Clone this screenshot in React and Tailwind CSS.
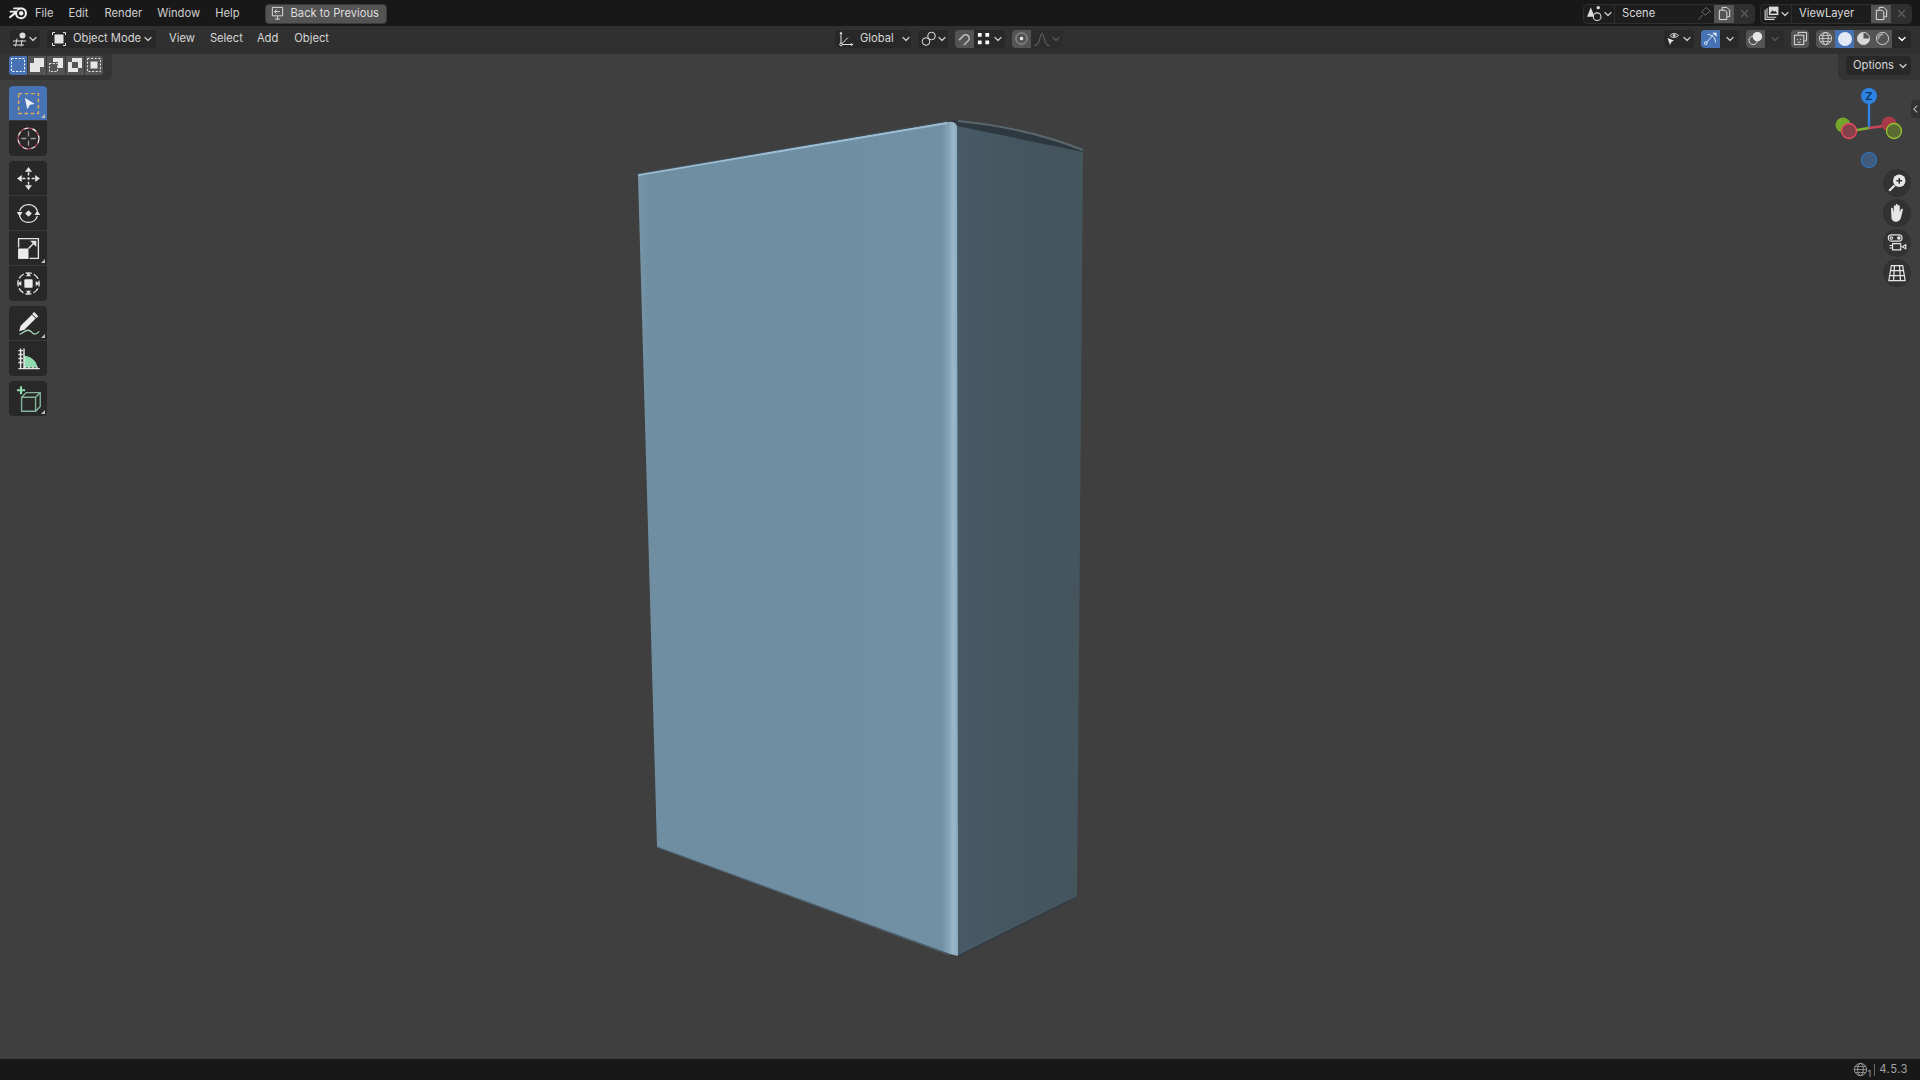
import React from 'react';

const Chevron = ({ className = 'text-[#c9c9c9]' }) => (
  <svg viewBox="0 0 10 10" className={`w-[10px] h-[10px] shrink-0 ${className}`} fill="none" stroke="currentColor" strokeWidth="1.3" strokeLinecap="round" strokeLinejoin="round">
    <path d="M2 3.5 5 6.5 8 3.5" />
  </svg>
);

// 16x16 icon wrapper, blender icons are drawn on this grid
const Ic = ({ size = 16, className = 'text-[#e2e2e2]', children }) => (
  <svg viewBox="0 0 16 16" width={size} height={size} className={`shrink-0 ${className}`} fill="none" stroke="currentColor" strokeWidth="1">
    {children}
  </svg>
);

const BlenderLogo = () => (
  <svg viewBox="0 0 20 16" width="20" height="16" className="shrink-0 text-[#eeeeee] mb-[2px]" fill="currentColor">
    <path fillRule="evenodd" d="M12 2.2a6 6 0 1 1-5.900 7.200L1.600 13a1 1 0 0 1-1.300-1.500L5 7.600H1.500a.9.9 0 0 1 0-1.800l6-.1A6 6 0 0 1 12 2.200Zm0 2.200a3.900 3.900 0 1 0 0 7.800 3.900 3.900 0 0 0 0-7.800Z" />
    <circle cx="12.200" cy="8.200" r="2.200" />
    <path d="M5 2.600h6v1.700H5a.85.85 0 0 1 0-1.700Z" />
  </svg>
);

const SelectModes = () => {
  const cells = [
    <Ic key="a" size={16} className="text-white"><rect x="1.500" y="1.500" width="13" height="13" strokeDasharray="2 1.600" /></Ic>,
    <Ic key="b" size={16} className="text-[#e6e6e6]"><path fill="currentColor" stroke="none" d="M5 1h10v9h-4v5H1V6h4Z" /></Ic>,
    <Ic key="c" size={16} className="text-[#e6e6e6]"><rect x="1.500" y="6.500" width="8" height="8" strokeDasharray="2 1.400" /><path fill="currentColor" stroke="none" d="M5 1h10v10h-5V5H5Z" /></Ic>,
    <Ic key="d" size={16} className="text-[#e6e6e6]"><path fill="currentColor" stroke="none" fillRule="evenodd" d="M5 1h10v10h-4v4H1V5h4Zm0 4v6h6V5Z" /></Ic>,
    <Ic key="e" size={16} className="text-[#e6e6e6]"><rect x="1.500" y="1.500" width="13" height="13" strokeDasharray="2 1.600" /><rect x="4.500" y="4.500" width="7" height="7" fill="currentColor" stroke="none" /></Ic>,
  ];
  return (
    <div className="flex ml-[9px] gap-px">
      {cells.map((c, i) => (
        <div key={i} className={`w-[18px] h-[19px] flex items-center justify-center ${i === 0 ? 'bg-[#4772b3] rounded-l-[3px]' : 'bg-[#545454]'} ${i === 4 ? 'rounded-r-[3px]' : ''}`}>
          {c}
        </div>
      ))}
    </div>
  );
};

const Tool = ({ active, corner, children }) => (
  <div className={`relative w-[38px] h-[35px] flex items-center justify-center border-b border-[#3a3a3a] last:border-b-0 ${active ? 'bg-[#4772b3]' : ''}`}>
    {children}
    {corner && <span className="absolute right-[2px] bottom-[2px] w-0 h-0 border-l-[4px] border-l-transparent border-b-[4px] border-b-[#bdbdbd]" />}
  </div>
);

const ToolGroup = ({ children }) => (
  <div className="w-[38px] rounded-[4px] bg-[#282828] overflow-hidden">{children}</div>
);

const Toolbar = () => (
  <div className="absolute left-[9px] top-[32px] flex flex-col gap-[5px]">
    <ToolGroup>
      <Tool active corner>
        <svg viewBox="0 0 24 24" width="25" height="25" fill="none">
          <rect x="2.500" y="2.500" width="19" height="19" stroke="#e4ab5a" strokeWidth="1.400" strokeDasharray="3.400 2.600" />
          <path d="M8.500 6.500 18 12.500l-4.500.6-2.700 4.400Z" fill="#e9edf4" />
        </svg>
      </Tool>
      <Tool>
        <svg viewBox="0 0 24 24" width="25" height="25" fill="none">
          <circle cx="12" cy="12" r="10" stroke="#e8e8e8" strokeWidth="1.300" strokeDasharray="5 3.400" />
          <circle cx="12" cy="12" r="10" stroke="#b04a5c" strokeWidth="1.300" strokeDasharray="5 3.400" strokeDashoffset="4.200" />
          <path d="M12 5v5M12 14v5M5 12h5M14 12h5" stroke="#9a9a9a" strokeWidth="1.300" />
        </svg>
      </Tool>
    </ToolGroup>
    <ToolGroup>
      <Tool>
        <svg viewBox="0 0 24 24" width="25" height="25" fill="#e4e4e4">
          <path d="m12 1 3.400 4.600H8.600ZM12 23l-3.400-4.600h6.800ZM1 12l4.600-3.400v6.800ZM23 12l-4.600 3.400V8.600Z" />
          <path d="M11.300 6h1.400v3h-1.400ZM11.300 15h1.400v3h-1.400ZM6 11.300h3v1.400H6ZM15 11.300h3v1.400h-3Z" />
          <circle cx="12" cy="12" r="1.200" />
        </svg>
      </Tool>
      <Tool>
        <svg viewBox="0 0 24 24" width="25" height="25" fill="none">
          <path d="M3.500 9.500A9 9 0 0 1 20.500 9.500M20.500 14.500A9 9 0 0 1 3.500 14.500" stroke="#e4e4e4" strokeWidth="1.300" />
          <path d="m12 8.800 3.200 3.200-3.200 3.200L8.800 12Z" fill="#e4e4e4" />
          <path d="m.8 10.500 5.400 0-2.700 4.500ZM23.200 13.500l-5.400 0 2.700-4.500Z" fill="#e4e4e4" />
        </svg>
      </Tool>
      <Tool corner>
        <svg viewBox="0 0 24 24" width="25" height="25" fill="none">
          <path d="M2.500 11V2.500h19v19H13" stroke="#e4e4e4" strokeWidth="1.300" />
          <rect x="2" y="12" width="10" height="10" fill="#ececec" />
          <path d="M12 12 18.500 5.500" stroke="#e4e4e4" strokeWidth="1.400" />
          <path d="M19.500 4.500v6l-6-6Z" fill="#e4e4e4" />
        </svg>
      </Tool>
      <Tool>
        <svg viewBox="0 0 24 24" width="25" height="25" fill="none">
          <circle cx="12" cy="12" r="10.200" stroke="#e4e4e4" strokeWidth="1.300" strokeDasharray="6 2" strokeDashoffset="3" />
          <rect x="8" y="8" width="8" height="8" rx="1" fill="#ececec" />
          <path d="m12 1.500 2.400 3.600H9.600ZM12 22.500l-2.400-3.600h4.800ZM1.500 12l3.600-2.400v4.800ZM22.500 12l-3.600 2.400V9.600Z" fill="#e4e4e4" />
        </svg>
      </Tool>
    </ToolGroup>
    <ToolGroup>
      <Tool corner>
        <svg viewBox="0 0 24 24" width="27" height="27" fill="none">
          <path d="m5.500 14.500 9.500-9.500 2.500 2.500-9.500 9.500-3.500 1Z" stroke="#ececec" strokeWidth="1.200" fill="#ececec" />
          <path d="m16 3.500 1-1 3 3-1 1Z" fill="#ececec" stroke="#ececec" strokeWidth="1" />
          <path d="M4 21.500c3 0 4-3.500 7.500-3.500 3.500 0 3.500 3.400 6 3.400 2 0 3-1.400 4-2.400" stroke="#a7d8b8" strokeWidth="1.200" />
        </svg>
      </Tool>
      <Tool>
        <svg viewBox="0 0 24 24" width="27" height="27" fill="none">
          <path d="M8 9.500c6 0 11 4.500 12 10.500H8Z" fill="#8fdcae" />
          <path d="M3 21h19M5 3v18M8 3v18M3 5h4M3 8.500h4M3 12h4M3 15.500h4M9 19v2M12.500 19v2M16 19v2M19.500 19v2" stroke="#e4e4e4" strokeWidth="1.300" />
        </svg>
      </Tool>
    </ToolGroup>
    <ToolGroup>
      <Tool corner>
        <svg viewBox="0 0 24 24" width="28" height="28" fill="none">
          <path d="M2.500 4.500h7M6 1v7" stroke="#8fdcae" strokeWidth="1.800" />
          <path d="M6.500 10.500h12v12h-12Zm0 0 4-4h12v12l-4 4m0-12 4-4" stroke="#83b39a" strokeWidth="1.200" />
        </svg>
      </Tool>
    </ToolGroup>
  </div>
);

// the thing that sits in the middle of the view, coords are screen pixels
const BoxModel = () => (
  <svg viewBox="0 54 1920 1005" className="absolute inset-0 w-full h-full">
    <defs>
      <linearGradient id="leftFace" gradientUnits="userSpaceOnUse" x1="638" y1="500" x2="958" y2="500">
        <stop offset="0" stopColor="#7896a8" />
        <stop offset="0.03" stopColor="#6f8ea1" />
        <stop offset="0.5" stopColor="#6f8ea1" />
        <stop offset="0.95" stopColor="#7190a3" />
        <stop offset="0.972" stopColor="#86a5b7" />
        <stop offset="0.985" stopColor="#9ab8ca" />
        <stop offset="1" stopColor="#8aaac0" />
      </linearGradient>
      <linearGradient id="rightFace" gradientUnits="userSpaceOnUse" x1="957" y1="500" x2="1083" y2="500">
        <stop offset="0" stopColor="#485a66" />
        <stop offset="0.6" stopColor="#44555e" />
        <stop offset="1" stopColor="#44555e" />
      </linearGradient>
    </defs>
    <path d="M948 122Q952 120 956 120C1000 124 1050 135 1083 150L1083 154 957 127Z" fill="#2e383f" />
    <path d="M958 121C1000 125 1045 135 1083 150" fill="none" stroke="#59666d" strokeWidth="2" />
    <path d="M957 126 1083 152 1077 897 957 956Z" fill="url(#rightFace)" />
    <path d="M638 175 948 122Q955 121 957 126L958 956 950 954 657 847Z" fill="url(#leftFace)" />
    <path d="M638 175 947 123" stroke="#9abed6" strokeWidth="2" fill="none" />
    <path d="M638 174 947 121" stroke="#44545e" strokeWidth="0.6" fill="none" />
    <path d="M657 847 950 955" stroke="#4e6270" strokeWidth="1.200" fill="none" />
    <path d="M958 956 1077 897" stroke="#2f3a41" strokeWidth="1.200" fill="none" />
  </svg>
);

const NavButton = ({ children }) => (
  <div className="w-[28px] h-[28px] rounded-full bg-[#323232] flex items-center justify-center">{children}</div>
);

const Gizmo = () => (
  <svg viewBox="0 0 80 100" width="80" height="100" className="absolute right-[11px] top-[32px]">
    <path d="M40 42V14" stroke="#2f82e6" strokeWidth="2.400" />
    <path d="M40 42 22 45" stroke="#7fb130" strokeWidth="2.400" />
    <path d="M40 42 62 39" stroke="#c94658" strokeWidth="2.400" />
    <circle cx="14" cy="39" r="7.500" fill="#74a62c" />
    <circle cx="60" cy="38" r="7.500" fill="#a83a4a" />
    <circle cx="20" cy="45" r="7.500" fill="#84414b" stroke="#ee4a60" strokeWidth="1.300" />
    <circle cx="65" cy="45" r="7.500" fill="#5a6c33" stroke="#94c52f" strokeWidth="1.300" />
    <circle cx="40" cy="10" r="8" fill="#2c83e2" />
    <text x="40" y="14" textAnchor="middle" fontSize="11" fontWeight="700" fill="#103a66" fontFamily="Inter, sans-serif">Z</text>
    <circle cx="40" cy="74" r="7.500" fill="#3f5a7c" stroke="#2f76c8" strokeWidth="1.200" />
  </svg>
);

const NavButtons = () => (
  <div className="absolute right-[9px] top-[115px] flex flex-col gap-[2px]">
    <NavButton>
      <svg viewBox="0 0 16 16" width="20" height="20">
        <circle cx="9.800" cy="6.200" r="5" fill="#e6e6e6" />
        <path d="M6 10 1.800 14.200" stroke="#e6e6e6" strokeWidth="1.800" />
        <path d="M7.500 6.200h4.600M9.800 3.900v4.600" stroke="#323232" strokeWidth="1.200" />
      </svg>
    </NavButton>
    <NavButton>
      <svg viewBox="0 0 16 16" width="20" height="20" fill="#e6e6e6">
        <path d="M3.200 4.600c0-1 1.300-1 1.500 0l.7 3V2.800c0-1.100 1.600-1.100 1.600 0v4.400V1.600c0-1 1.600-1 1.600 0v5.600-4.600c0-1 1.600-1 1.600 0v5.200c.3-1.200.7-2.600 1.200-3 .8-.6 1.500 0 1.200.9l-1.200 5c-.5 2.500-1.800 4.300-4.200 4.300-2 0-3-1-3.600-2.600Z" />
      </svg>
    </NavButton>
    <NavButton>
      <svg viewBox="0 0 16 16" width="20" height="20" fill="none" stroke="#e6e6e6" strokeWidth="0.900">
        <rect x="1" y="1.500" width="11" height="5" rx="2.500" />
        <circle cx="3.500" cy="4" r="1" /><circle cx="9.500" cy="4" r="1" fill="#e6e6e6" />
        <path d="M4.500 8.500h6.500v5H4.500ZM2 10h2.500M2 12h2.500M12.200 11l2.800-1.700v3.400Z" />
      </svg>
    </NavButton>
    <NavButton>
      <svg viewBox="0 0 16 16" width="20" height="20" fill="none" stroke="#e6e6e6" strokeWidth="1">
        <path d="M3.500 2h9l2 12h-13ZM1.900 10h12.200M2.700 6h10.600M6 2l-.8 12M10 2l.8 12" />
      </svg>
    </NavButton>
  </div>
);

const TopBar = () => (
  <div className="h-[26px] shrink-0 bg-[#181818] flex items-center text-[#cfcfcf] pt-px">
    <div className="ml-[9px] w-[26px]"><BlenderLogo /></div>
    <span>File</span>
    <span className="ml-[15px]">Edit</span>
    <span className="ml-[16px]">Render</span>
    <span className="ml-[15px]">Window</span>
    <span className="ml-[15px]">Help</span>
    <div className="ml-[25px] w-[122px] h-[20px] rounded-[4px] bg-[#545454] border border-[#3a3a3a] flex items-center pl-[4px] gap-[6px] text-[#dedede]">
      <Ic size={15} className="text-[#e2e2e2]">
        <path d="M2.500 1.500h11v9h-11Z" />
        <path d="M5.500 14h5M8 11v3" />
        <path d="M10.500 6H5m2-2.200L4.800 6 7 8.200" />
      </Ic>
      <span>Back to Previous</span>
    </div>
    <div className="ml-auto mr-[8px] flex gap-[5px]">
      <div className="w-[172px] h-[20px] rounded-[4px] bg-[#1d1d1d] border border-[#2e2e2e] flex items-center overflow-hidden">
        <div className="w-[31px] flex items-center justify-center border-r border-[#2e2e2e] h-full">
          <Ic size={17} className="text-[#dcdcdc]">
            <circle cx="11.500" cy="2.500" r="1.600" fill="currentColor" stroke="none" />
            <path d="M4.500 2 8 11H1Z" fill="currentColor" stroke="none" />
            <circle cx="10.500" cy="11" r="3.600" fill="#1d1d1d" />
          </Ic>
          <Chevron />
        </div>
        <span className="pl-[7px] flex-1 text-[#d8d8d8]">Scene</span>
        <div className="w-[20px] flex justify-center">
          <Ic size={15} className="text-[#6f6f6f]"><path d="M10 1.500l4.500 4.500-3 1-2.500 3-4-4 3-2.500ZM6 9.500 1.500 14.500" /></Ic>
        </div>
        <div className="w-[20px] h-full bg-[#545454] flex items-center justify-center">
          <Ic size={15} className="text-[#e8e8e8]"><path d="M5.500 4V1.500h5l3 3v7H11M2.500 4.500h6l2 2v8h-8Z" /></Ic>
        </div>
        <div className="w-[20px] h-full bg-[#2f2f2f] flex items-center justify-center">
          <Ic size={11} className="text-[#5e5e5e]"><path d="m3 3 10 10M13 3 3 13" strokeWidth="1.800" /></Ic>
        </div>
      </div>
      <div className="w-[152px] h-[20px] rounded-[4px] bg-[#1d1d1d] border border-[#2e2e2e] flex items-center overflow-hidden">
        <div className="w-[31px] flex items-center justify-center border-r border-[#2e2e2e] h-full">
          <Ic size={17} className="text-[#dcdcdc]">
            <path d="M2 4.500v9h9M3.800 3v8.500h8.700" />
            <rect x="5.500" y="1.500" width="9" height="8" fill="currentColor" stroke="none" />
            <path d="m6.500 8 2.500-3 1.500 1.500 1-1 2 2.500Z" fill="#1d1d1d" stroke="none" />
          </Ic>
          <Chevron />
        </div>
        <span className="pl-[7px] flex-1 text-[#d8d8d8]">ViewLayer</span>
        <div className="w-[20px] h-full bg-[#545454] flex items-center justify-center">
          <Ic size={15} className="text-[#e8e8e8]"><path d="M5.500 4V1.500h5l3 3v7H11M2.500 4.500h6l2 2v8h-8Z" /></Ic>
        </div>
        <div className="w-[20px] h-full bg-[#2f2f2f] flex items-center justify-center">
          <Ic size={11} className="text-[#5e5e5e]"><path d="m3 3 10 10M13 3 3 13" strokeWidth="1.800" /></Ic>
        </div>
      </div>
    </div>
  </div>
);

const HeaderBar = () => (
  <div className="h-[28px] shrink-0 bg-[#303030] flex items-center text-[#d6d6d6] pb-[3px]">
    <div className="ml-[10px] w-[30px] h-[18px] rounded-[4px] bg-[#282828] flex items-center justify-center">
      <Ic size={16} className="text-[#dcdcdc]">
        <circle cx="10.500" cy="4.500" r="3" fill="currentColor" stroke="none" />
        <path d="M1 10h13M1 14h11M5 7.500l-1.500 8M10 9l-1 6.500" />
      </Ic>
      <Chevron />
    </div>
    <div className="ml-[7px] w-[109px] h-[18px] rounded-[4px] bg-[#282828] flex items-center pl-[4px] pr-[3px]">
      <Ic size={16} className="text-[#e2e2e2]">
        <rect x="3.500" y="3.500" width="9" height="9" fill="currentColor" stroke="none" />
        <path d="M1.500 4V1.500H4M12 1.500h2.500V4M14.500 12v2.500H12M4 14.500H1.500V12" />
      </Ic>
      <span className="ml-[6px] flex-1 whitespace-nowrap">Object Mode</span>
      <Chevron />
    </div>
    <span className="ml-[13px]">View</span>
    <span className="ml-[15px]">Select</span>
    <span className="ml-[14px]">Add</span>
    <span className="ml-[16px]">Object</span>

    <div className="ml-[506px] flex items-center">
      <div className="w-[76px] h-[18px] rounded-[4px] bg-[#282828] flex items-center pl-[3px]">
        <Ic size={16} className="text-[#e2e2e2]">
          <path d="M3 2.500v11h11M3 13.500l7-7" />
          <path d="m3 .5 1.600 2.600H1.400ZM15.500 13.500l-2.600 1.600v-3.200Z" fill="currentColor" stroke="none" />
          <circle cx="3" cy="13.500" r="1.300" fill="#282828" />
        </Ic>
        <span className="ml-[6px] flex-1">Global</span>
        <Chevron />
      </div>
      <div className="ml-[7px] w-[30px] h-[18px] rounded-[4px] bg-[#282828] flex items-center pl-[3px]">
        <Ic size={16} className="text-[#e2e2e2]">
          <circle cx="5" cy="10.500" r="3.800" />
          <circle cx="10.500" cy="5" r="3.800" />
        </Ic>
        <Chevron />
      </div>
      <div className="ml-[7px] w-[50px] h-[18px] rounded-[4px] bg-[#282828] flex items-center overflow-hidden">
        <div className="w-[19px] h-full bg-[#545454] flex items-center justify-center">
          <Ic size={16} className="text-[#b9b9b9]"><path transform="rotate(45 8 8)" d="M4.500 13V7a3.500 3.500 0 0 1 7 0v6" strokeWidth="1.600" /></Ic>
        </div>
        <div className="flex-1 flex items-center justify-center gap-[2px]">
          <Ic size={15} className="text-white">
            <path d="M2 2h4v4H2ZM10 2h4v4h-4ZM2 10h4v4H2ZM10 10h4v4h-4Z" fill="currentColor" stroke="none" />
          </Ic>
          <Chevron />
        </div>
      </div>
      <div className="ml-[7px] w-[50px] h-[18px] rounded-[4px] bg-[#2c2c2c] flex items-center overflow-hidden">
        <div className="w-[19px] h-full bg-[#545454] flex items-center justify-center">
          <Ic size={15} className="text-[#a8a8a8]"><circle cx="8" cy="8" r="6" /><circle cx="8" cy="8" r="1.800" fill="#f0f0f0" stroke="none" /></Ic>
        </div>
        <div className="flex-1 flex items-center justify-center">
          <Ic size={18} className="text-[#5c5c5c]"><path d="M1 14c3 0 4-2 5-6 .8-3 1.200-5 2-5s1.200 2 2 5c1 4 2 6 5 6" /></Ic>
          <Chevron className="text-[#555555]" />
        </div>
      </div>
    </div>

    <div className="ml-auto mr-[9px] flex items-center">
      <div className="w-[30px] h-[18px] rounded-[4px] bg-[#282828] flex items-center justify-center">
        <Ic size={16} className="text-[#e6e6e6]">
          <path d="M4 4.500C6 2 10 2 12.500 4.500 10 7 6 7 4 4.500Z" />
          <circle cx="8.200" cy="4.500" r="1.300" fill="currentColor" stroke="none" />
          <path d="m1.500 7 6.500 2.500-2.500 1.200L4 14Z" fill="currentColor" stroke="none" />
        </Ic>
        <Chevron />
      </div>
      <div className="ml-[7px] w-[38px] h-[18px] rounded-[4px] bg-[#282828] flex items-center overflow-hidden">
        <div className="w-[19px] h-full bg-[#4772b3] flex items-center justify-center">
          <Ic size={15} className="text-[#eef3fb]">
            <circle cx="3" cy="13" r="1.500" />
            <path d="M4 12 11 4M13.500 12C13 7 10 4 5 3.500" />
            <path d="M10 1.800h4.500V6Z" fill="currentColor" stroke="none" />
          </Ic>
        </div>
        <div className="flex-1 flex justify-center"><Chevron /></div>
      </div>
      <div className="ml-[7px] w-[38px] h-[18px] rounded-[4px] bg-[#2c2c2c] flex items-center overflow-hidden">
        <div className="w-[19px] h-full bg-[#545454] flex items-center justify-center">
          <Ic size={15} className="text-[#e6e6e6]">
            <circle cx="5.500" cy="10" r="4.500" />
            <circle cx="10" cy="6" r="5" fill="currentColor" stroke="none" />
          </Ic>
        </div>
        <div className="flex-1 flex justify-center"><Chevron className="text-[#555555]" /></div>
      </div>
      <div className="ml-[7px] w-[18px] h-[18px] rounded-[4px] bg-[#545454] flex items-center justify-center">
        <Ic size={15} className="text-[#e2e2e2]">
          <path d="M5.500 4V1.500h9v9H12" />
          <rect x="1.500" y="4.500" width="10" height="10" />
          <path d="M5 8.500v1M8 8.500v1M5 12h3" />
        </Ic>
      </div>
      <div className="ml-[7px] w-[95px] h-[18px] rounded-[4px] bg-[#282828] flex items-center overflow-hidden">
        <div className="w-[19px] h-full bg-[#545454] flex items-center justify-center">
          <Ic size={15} className="text-[#d8d8d8]"><circle cx="8" cy="8" r="6.500" /><ellipse cx="8" cy="8" rx="3" ry="6.500" /><path d="M1.500 8h13M2.500 4.800h11M2.500 11.200h11" strokeWidth="0.800" /></Ic>
        </div>
        <div className="w-[19px] h-full bg-[#4772b3] flex items-center justify-center">
          <span className="w-[14px] h-[14px] rounded-full bg-[#e1e9f7]" />
        </div>
        <div className="w-[19px] h-full bg-[#545454] flex items-center justify-center">
          <Ic size={15} className="text-[#d8d8d8]"><circle cx="8" cy="8" r="6.500" /><path d="M8 1.500A6.500 6.500 0 1 0 14.500 8H8Z" fill="currentColor" stroke="none" /></Ic>
        </div>
        <div className="w-[19px] h-full bg-[#545454] flex items-center justify-center">
          <Ic size={15} className="text-[#d8d8d8]"><circle cx="8" cy="8" r="6.500" /><path d="M3.500 9A5 5 0 0 1 8.500 3.500" strokeWidth="2" opacity="0.600" /></Ic>
        </div>
        <div className="flex-1 flex justify-center"><Chevron className="text-white" /></div>
      </div>
    </div>
  </div>
);

const ToolSettings = () => (
  <div className="absolute top-0 left-0 right-0 h-[26px] flex justify-between pointer-events-none">
    <div className="w-[112px] h-[26px] bg-[#343434] rounded-br-[6px] flex items-center pb-[4px]">
      <SelectModes />
    </div>
    <div className="w-[82px] h-[26px] bg-[#343434] rounded-bl-[6px] flex items-center justify-end pr-[9px] pb-[3px]">
      <div className="w-[65px] h-[19px] rounded-[4px] bg-[#282828] flex items-center pl-[7px] pr-[3px] text-[#d6d6d6]">
        <span className="flex-1">Options</span>
        <Chevron />
      </div>
    </div>
  </div>
);

const StatusBar = () => (
  <div className="h-[21px] shrink-0 bg-[#181818] flex items-center justify-end pr-[12px] text-[#a3a3a3]">
    <Ic size={15} className="text-[#a3a3a3]">
      <circle cx="8" cy="8" r="6.500" />
      <ellipse cx="8" cy="8" rx="3" ry="6.500" />
      <path d="M1.500 8h13M2.500 4.800h11M2.500 11.200h11" strokeWidth="0.800" />
    </Ic>
    <span className="text-[9px] mt-[8px]">1</span>
    <span className="ml-[3px] mr-[4px] w-px h-[12px] bg-[#6a6a6a]" />
    <span className="tracking-[0.5px]">4.5.3</span>
  </div>
);

export default function App() {
  return (
    <div className="h-screen w-full flex flex-col overflow-hidden bg-[#3f3f3f] text-[11.2px] leading-none font-['Inter',sans-serif]">
      <TopBar />
      <HeaderBar />
      <div className="flex-1 relative bg-[#3f3f3f]">
        <BoxModel />
        <ToolSettings />
        <Toolbar />
        <Gizmo />
        <NavButtons />
        <div className="absolute right-0 top-[46px] w-[9px] h-[18px] rounded-l-[4px] bg-[#333333] flex items-center justify-center">
          <svg viewBox="0 0 8 12" width="7" height="10" fill="none" stroke="#b5b5b5" strokeWidth="1.300"><path d="M6 2 2 6l4 4" /></svg>
        </div>
      </div>
      <StatusBar />
    </div>
  );
}
